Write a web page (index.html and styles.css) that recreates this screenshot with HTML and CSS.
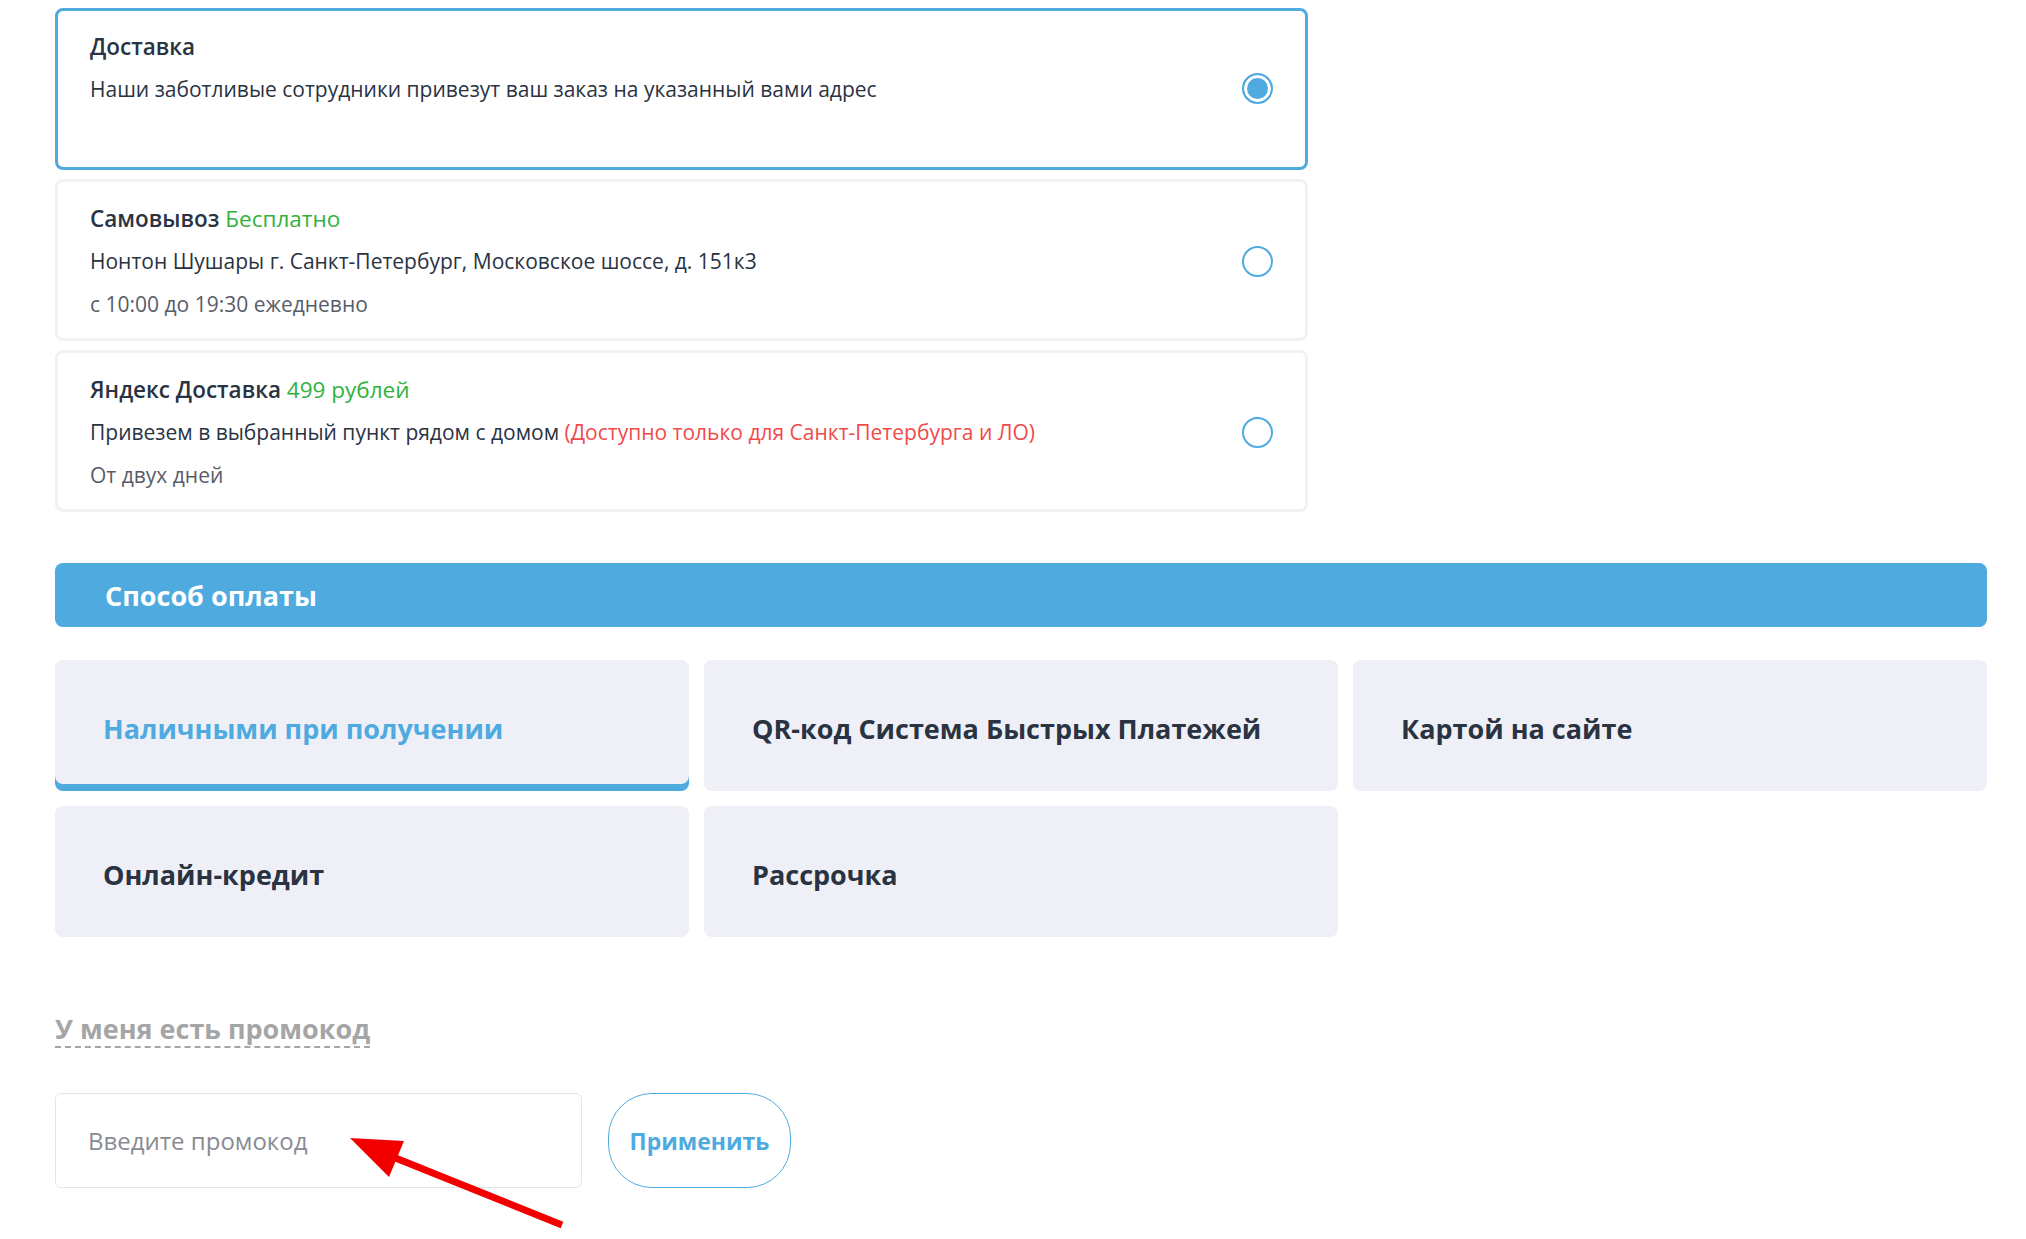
FILE: index.html
```html
<!DOCTYPE html>
<html lang="ru">
<head>
  <meta charset="UTF-8">
  <title>Оформление заказа</title>
  <link rel="stylesheet" href="styles.css">
</head>
<body>
  <main class="checkout">

    <!-- Delivery options -->
    <section class="delivery">
      <label class="delivery-option is-selected">
        <div class="delivery-info">
          <div class="delivery-title">Доставка</div>
          <div class="delivery-text">Наши заботливые сотрудники привезут ваш заказ на указанный вами адрес</div>
        </div>
        <span class="radio"></span>
      </label>

      <label class="delivery-option">
        <div class="delivery-info">
          <div class="delivery-title">Самовывоз <span class="price">Бесплатно</span></div>
          <div class="delivery-text">Нонтон Шушары г. Санкт-Петербург, Московское шоссе, д. 151к3</div>
          <div class="delivery-note">с 10:00 до 19:30 ежедневно</div>
        </div>
        <span class="radio"></span>
      </label>

      <label class="delivery-option">
        <div class="delivery-info">
          <div class="delivery-title">Яндекс Доставка <span class="price">499 рублей</span></div>
          <div class="delivery-text">Привезем в выбранный пункт рядом с домом <span class="warning">(Доступно только для Санкт-Петербурга и ЛО)</span></div>
          <div class="delivery-note">От двух дней</div>
        </div>
        <span class="radio"></span>
      </label>
    </section>

    <!-- Payment -->
    <h2 class="section-bar">Способ оплаты</h2>

    <div class="payment-grid">
      <div class="payment-tile is-active">Наличными при получении</div>
      <div class="payment-tile">QR-код Система Быстрых Платежей</div>
      <div class="payment-tile">Картой на сайте</div>
      <div class="payment-tile">Онлайн-кредит</div>
      <div class="payment-tile">Рассрочка</div>
    </div>

    <!-- Promo code -->
    <div class="promo">
      <a class="promo-toggle">У меня есть промокод</a>
      <div class="promo-form">
        <input class="promo-input" type="text" placeholder="Введите промокод">
        <button class="promo-apply">Применить</button>
        <svg class="promo-arrow" width="240" height="110" viewBox="0 0 240 110">
          <line x1="52" y1="31" x2="226" y2="101" stroke="#f20000" stroke-width="7"/>
          <polygon points="14,14 68,17 53,53" fill="#f20000"/>
        </svg>
      </div>
    </div>

  </main>
</body>
</html>
```

FILE: styles.css
```css
html, body {
  margin: 0;
  padding: 0;
  background: #fff;
  color: #2a3342;
  font-family: "Open Sans", "Noto Sans", sans-serif;
}

.checkout {
  padding: 8px 39px 40px 55px;
}

/* Delivery */

.delivery {
  display: flex;
  flex-direction: column;
  gap: 9px;
  width: 1253px;
}

.delivery-option {
  display: flex;
  align-items: center;
  justify-content: space-between;
  min-height: 162px;
  box-sizing: border-box;
  padding: 14px 32px 12px 32px;
  border: 3px solid #f1f2f4;
  border-radius: 8px;
  cursor: pointer;
}

.delivery-option.is-selected {
  border-color: #4eaadf;
  align-items: flex-start;
}

.delivery-option.is-selected .radio {
  margin-top: 48px;
}

.delivery-info {
  font-size: 21px;
  line-height: 43px;
}

.delivery-title {
  font-size: 22.5px;
  font-weight: 600;
}

.price {
  font-weight: 400;
  color: #30b23d;
}

.warning {
  color: #ef4b4b;
}

.delivery-note {
  color: #575d68;
}

.radio {
  flex: none;
  width: 31px;
  height: 31px;
  box-sizing: border-box;
  border: 2.5px solid #4eaadf;
  border-radius: 50%;
  background: #fff;
}

.is-selected .radio {
  background: #4eaadf;
  box-shadow: inset 0 0 0 3px #fff;
}

/* Payment */

.section-bar {
  margin: 51px 0 0;
  height: 64px;
  padding-left: 50px;
  background: #4eaadf;
  border-radius: 8px;
  color: #fff;
  font-size: 27px;
  font-weight: 700;
  line-height: 66px;
}

.payment-grid {
  margin-top: 33px;
  display: grid;
  grid-template-columns: repeat(3, 1fr);
  gap: 15px 15px;
}

.payment-tile {
  display: flex;
  align-items: center;
  height: 131px;
  box-sizing: border-box;
  padding: 5px 0 0 48px;
  background: #eff0f7;
  border-radius: 8px;
  font-size: 27px;
  font-weight: 700;
  cursor: pointer;
}

.payment-tile.is-active {
  color: #4eaadf;
  box-shadow: inset 0 -7px 0 #4eaadf;
}

/* Promo */

.promo {
  margin-top: 74px;
}

.promo-toggle {
  display: inline-block;
  color: #a5a5a7;
  font-size: 27px;
  font-weight: 700;
  line-height: 35px;
  border-bottom: 2px dashed #a5a5a7;
  cursor: pointer;
}

.promo-form {
  position: relative;
  display: flex;
  gap: 26px;
  margin-top: 45px;
}

.promo-input {
  width: 527px;
  height: 95px;
  box-sizing: border-box;
  padding: 0 20px 0 32px;
  border: 1px solid #e4e5e9;
  border-radius: 6px;
  font-family: inherit;
  font-size: 24px;
  color: #2a3342;
  outline: none;
}

.promo-input::placeholder {
  color: #888b94;
}

.promo-apply {
  width: 183px;
  height: 95px;
  border: 1.5px solid #4eaadf;
  border-radius: 44px;
  background: #fff;
  color: #4eaadf;
  font-family: inherit;
  font-size: 23px;
  font-weight: 700;
  cursor: pointer;
}

.promo-arrow {
  position: absolute;
  left: 281px;
  top: 31px;
}
```
